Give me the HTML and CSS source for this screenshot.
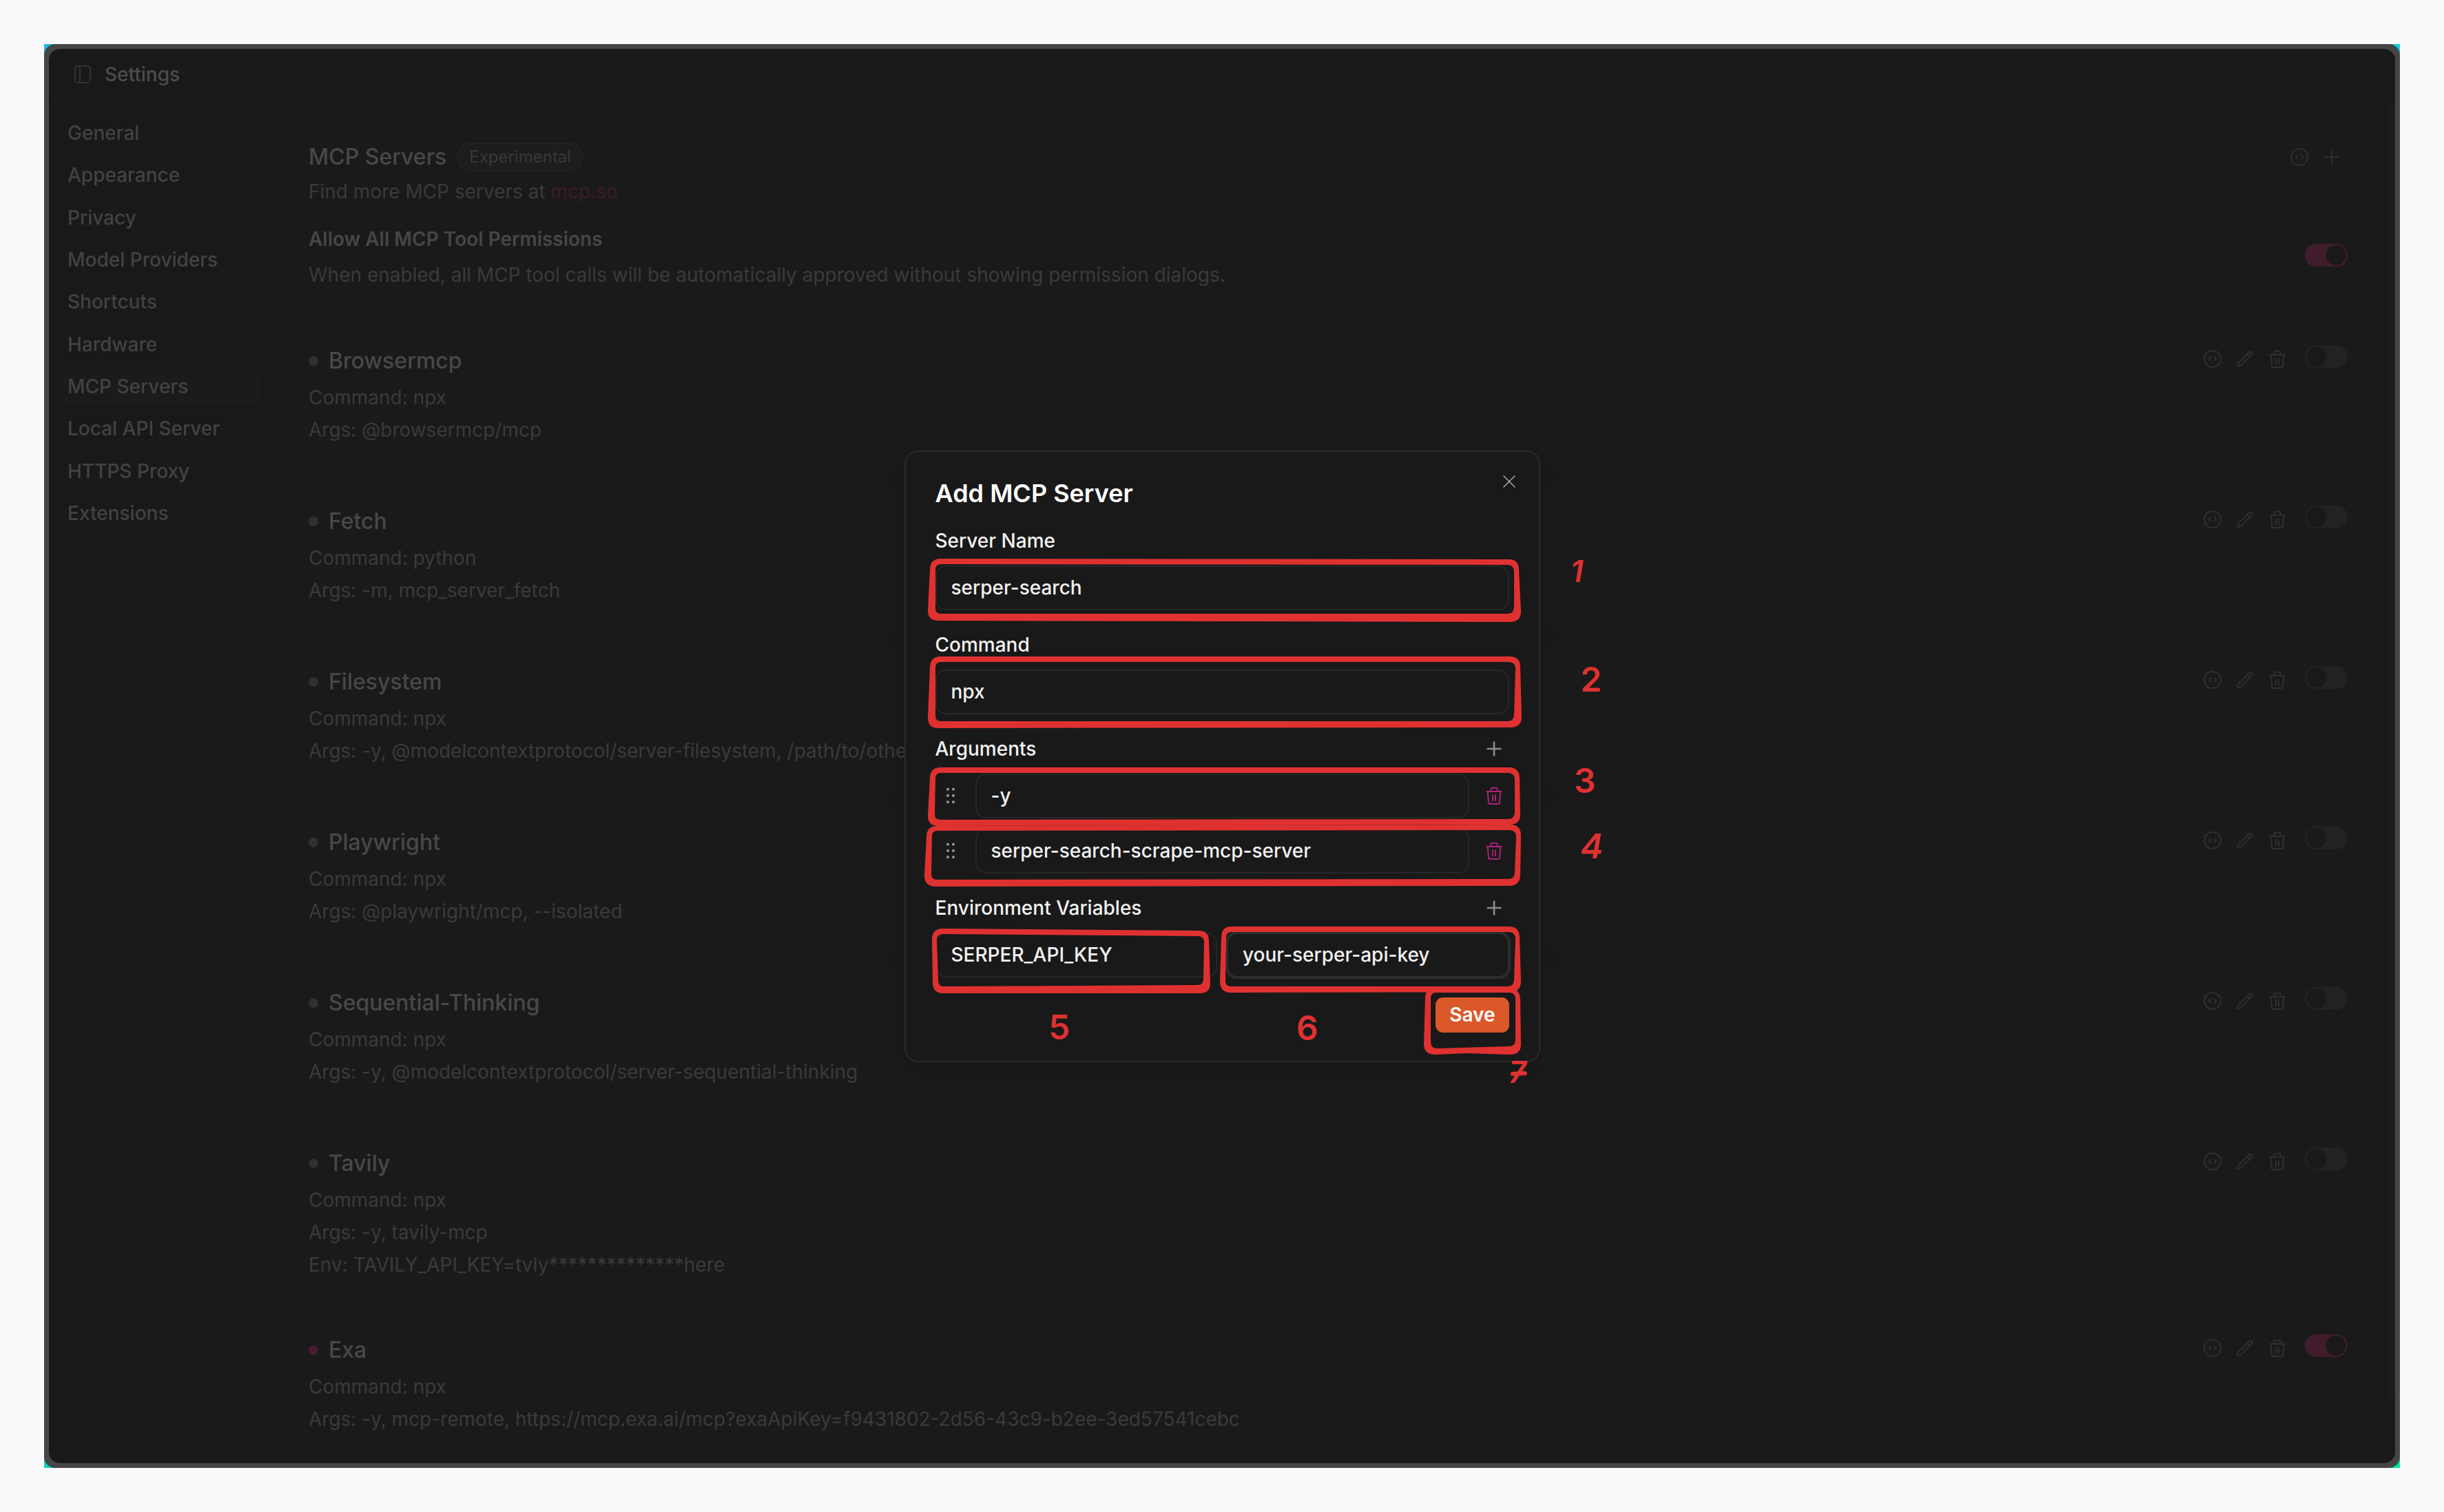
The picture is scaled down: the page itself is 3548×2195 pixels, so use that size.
FILE: index.html
```html
<!DOCTYPE html>
<html lang="en">
<head>
<meta charset="utf-8">
<title>Settings - MCP Servers</title>
<link rel="stylesheet" href="styles.css">
</head>
<body>
<svg class="sprite" aria-hidden="true">
  <symbol id="i-code" viewBox="0 0 24 24"><circle cx="12" cy="12" r="9"/><path d="M10 10l-2 2 2 2M14 10l2 2-2 2"/></symbol>
  <symbol id="i-pencil" viewBox="0 0 24 24"><path d="M4 20h1.500a3 3 0 0 0 2-.8L19.300 7.400a2 2 0 0 0 0-2.700a2 2 0 0 0-2.700 0L4.800 16.500a3 3 0 0 0-.8 2zM14.500 6.800l2.700 2.700"/></symbol>
  <symbol id="i-trash" viewBox="0 0 24 24"><path d="M4 7.500h16M8.500 7.500V5a1.500 1.500 0 0 1 1.500-1.500h4A1.500 1.500 0 0 1 15.500 5v2.500M5 7.500l1 12a1.500 1.500 0 0 0 1.500 1.500h9a1.500 1.500 0 0 0 1.500-1.500l1-12M10.500 11.500v6M13.500 11.500v6"/></symbol>
  <symbol id="i-plus" viewBox="0 0 24 24"><path d="M12 5v14M5 12h14"/></symbol>
  <symbol id="i-close" viewBox="0 0 24 24"><path d="M4 4l16 16M20 4L4 20"/></symbol>
  <symbol id="i-grip" viewBox="0 0 24 24"><circle cx="9" cy="5" r="1"/><circle cx="15" cy="5" r="1"/><circle cx="9" cy="12" r="1"/><circle cx="15" cy="12" r="1"/><circle cx="9" cy="19" r="1"/><circle cx="15" cy="19" r="1"/></symbol>
</svg>

<div class="desktop">
<div class="window">
  <header class="topbar">
    <button class="icon-btn" aria-label="Toggle sidebar"><svg class="panel-icon" viewBox="0 0 24 26"><rect x="1" y="1" width="22" height="24" rx="4"/><path d="M8 1v24"/></svg></button>
    <h1>Settings</h1>
  </header>
  <div class="columns">
    <nav class="sidebar">
      <a href="#">General</a>
      <a href="#">Appearance</a>
      <a href="#">Privacy</a>
      <a href="#">Model Providers</a>
      <a href="#">Shortcuts</a>
      <a href="#">Hardware</a>
      <a href="#" class="active">MCP Servers</a>
      <a href="#">Local API Server</a>
      <a href="#">HTTPS Proxy</a>
      <a href="#">Extensions</a>
    </nav>
    <main class="content">
      <section class="card intro">
        <div class="intro-head">
          <h2>MCP Servers</h2><span class="badge">Experimental</span>
          <div class="actions"><button class="icon-btn" aria-label="Edit all servers as JSON"><svg class="icon"><use href="#i-code"/></svg></button><button class="icon-btn" aria-label="Add server"><svg class="icon"><use href="#i-plus"/></svg></button></div>
        </div>
        <p>Find more MCP servers at <a href="#">mcp.so</a></p>
        <div class="permission">
          <div><h3><label for="allow-all">Allow All MCP Tool Permissions</label></h3>
          <p>When enabled, all MCP tool calls will be automatically approved without showing permission dialogs.</p></div>
          <input type="checkbox" class="switch" id="allow-all" checked>
        </div>
      </section>

      <section class="card">
        <div class="details"><h2><i class="dot"></i>Browsermcp</h2><p>Command: npx</p><p>Args: @browsermcp/mcp</p></div>
        <div class="tools"><div class="actions"><button class="icon-btn" aria-label="Edit JSON"><svg class="icon"><use href="#i-code"/></svg></button><button class="icon-btn" aria-label="Edit"><svg class="icon"><use href="#i-pencil"/></svg></button><button class="icon-btn" aria-label="Delete"><svg class="icon"><use href="#i-trash"/></svg></button></div><input type="checkbox" class="switch" aria-label="Enable Browsermcp"></div>
      </section>
      <section class="card">
        <div class="details"><h2><i class="dot"></i>Fetch</h2><p>Command: python</p><p>Args: -m, mcp_server_fetch</p></div>
        <div class="tools"><div class="actions"><button class="icon-btn" aria-label="Edit JSON"><svg class="icon"><use href="#i-code"/></svg></button><button class="icon-btn" aria-label="Edit"><svg class="icon"><use href="#i-pencil"/></svg></button><button class="icon-btn" aria-label="Delete"><svg class="icon"><use href="#i-trash"/></svg></button></div><input type="checkbox" class="switch" aria-label="Enable Fetch"></div>
      </section>
      <section class="card">
        <div class="details"><h2><i class="dot"></i>Filesystem</h2><p>Command: npx</p><p>Args: -y, @modelcontextprotocol/server-filesystem, /path/to/other</p></div>
        <div class="tools"><div class="actions"><button class="icon-btn" aria-label="Edit JSON"><svg class="icon"><use href="#i-code"/></svg></button><button class="icon-btn" aria-label="Edit"><svg class="icon"><use href="#i-pencil"/></svg></button><button class="icon-btn" aria-label="Delete"><svg class="icon"><use href="#i-trash"/></svg></button></div><input type="checkbox" class="switch" aria-label="Enable Filesystem"></div>
      </section>
      <section class="card">
        <div class="details"><h2><i class="dot"></i>Playwright</h2><p>Command: npx</p><p>Args: @playwright/mcp, --isolated</p></div>
        <div class="tools"><div class="actions"><button class="icon-btn" aria-label="Edit JSON"><svg class="icon"><use href="#i-code"/></svg></button><button class="icon-btn" aria-label="Edit"><svg class="icon"><use href="#i-pencil"/></svg></button><button class="icon-btn" aria-label="Delete"><svg class="icon"><use href="#i-trash"/></svg></button></div><input type="checkbox" class="switch" aria-label="Enable Playwright"></div>
      </section>
      <section class="card">
        <div class="details"><h2><i class="dot"></i>Sequential-Thinking</h2><p>Command: npx</p><p>Args: -y, @modelcontextprotocol/server-sequential-thinking</p></div>
        <div class="tools"><div class="actions"><button class="icon-btn" aria-label="Edit JSON"><svg class="icon"><use href="#i-code"/></svg></button><button class="icon-btn" aria-label="Edit"><svg class="icon"><use href="#i-pencil"/></svg></button><button class="icon-btn" aria-label="Delete"><svg class="icon"><use href="#i-trash"/></svg></button></div><input type="checkbox" class="switch" aria-label="Enable Sequential-Thinking"></div>
      </section>
      <section class="card">
        <div class="details"><h2><i class="dot"></i>Tavily</h2><p>Command: npx</p><p>Args: -y, tavily-mcp</p><p>Env: TAVILY_API_KEY=tvly**************here</p></div>
        <div class="tools"><div class="actions"><button class="icon-btn" aria-label="Edit JSON"><svg class="icon"><use href="#i-code"/></svg></button><button class="icon-btn" aria-label="Edit"><svg class="icon"><use href="#i-pencil"/></svg></button><button class="icon-btn" aria-label="Delete"><svg class="icon"><use href="#i-trash"/></svg></button></div><input type="checkbox" class="switch" aria-label="Enable Tavily"></div>
      </section>
      <section class="card">
        <div class="details"><h2><i class="dot on"></i>Exa</h2><p>Command: npx</p><p>Args: -y, mcp-remote, https://mcp.exa.ai/mcp?exaApiKey=f9431802-2d56-43c9-b2ee-3ed57541cebc</p></div>
        <div class="tools"><div class="actions"><button class="icon-btn" aria-label="Edit JSON"><svg class="icon"><use href="#i-code"/></svg></button><button class="icon-btn" aria-label="Edit"><svg class="icon"><use href="#i-pencil"/></svg></button><button class="icon-btn" aria-label="Delete"><svg class="icon"><use href="#i-trash"/></svg></button></div><input type="checkbox" class="switch" aria-label="Enable Exa" checked></div>
      </section>
    </main>
    <div class="scrollbar"></div>
  </div>
</div>

<div class="backdrop">
  <form class="dialog" role="dialog" aria-labelledby="dialog-title">
    <h2 id="dialog-title">Add MCP Server</h2>
    <button type="button" class="icon-btn close" aria-label="Close"><svg class="icon"><use href="#i-close"/></svg></button>
    <div class="field">
      <label for="name">Server Name</label>
      <input type="text" id="name" value="serper-search">
    </div>
    <div class="field">
      <label for="command">Command</label>
      <input type="text" id="command" value="npx">
    </div>
    <div class="field">
      <div class="field-head"><label for="arg1">Arguments</label><button type="button" class="icon-btn" aria-label="Add argument"><svg class="icon"><use href="#i-plus"/></svg></button></div>
      <div class="arg"><svg class="grip"><use href="#i-grip"/></svg><input type="text" id="arg1" value="-y"><button type="button" class="icon-btn remove" aria-label="Remove argument"><svg class="icon"><use href="#i-trash"/></svg></button></div>
      <div class="arg"><svg class="grip"><use href="#i-grip"/></svg><input type="text" aria-label="Argument 2" value="serper-search-scrape-mcp-server"><button type="button" class="icon-btn remove" aria-label="Remove argument"><svg class="icon"><use href="#i-trash"/></svg></button></div>
    </div>
    <div class="field">
      <div class="field-head"><label for="key">Environment Variables</label><button type="button" class="icon-btn" aria-label="Add variable"><svg class="icon"><use href="#i-plus"/></svg></button></div>
      <div class="pair"><input type="text" id="key" value="SERPER_API_KEY"><input type="text" class="focused" aria-label="Value" value="your-serper-api-key"></div>
    </div>
    <div class="footer"><button type="button" class="save">Save</button></div>

    <svg class="marks" viewBox="1313 652 923 890" aria-hidden="true">
      <g fill-rule="evenodd">
        <path d="M1366 809L2190 810Q2205 810 2205 825L2208 885Q2208 901 2192 901L1362 899Q1347 899 1347 884L1350 825Q1350 809 1366 809ZM1366 817Q1358 817 1358 825L1358 881Q1358 889 1366 889L2188 889Q2198 889 2198 879L2198 828Q2198 818 2188 818Z"/>
        <path d="M1366 951H2191Q2207 951 2207 966L2209 1038Q2209 1054 2193 1054L1362 1055Q1347 1055 1347 1040L1350 967Q1350 951 1366 951ZM1366 959Q1358 959 1358 967V1037Q1358 1045 1366 1045H2188Q2198 1045 2198 1035L2200 969Q2200 959 2190 959Z"/>
        <path d="M1366 1112H2190Q2206 1112 2206 1128L2207 1180Q2207 1195 2192 1195L1362 1197Q1347 1197 1347 1182L1350 1128Q1350 1112 1366 1112ZM1366 1120Q1358 1120 1358 1128L1357 1180Q1357 1188 1365 1188L2189 1187Q2199 1187 2199 1177V1130Q2199 1120 2189 1120Z"/>
        <path d="M1361 1197L2192 1195Q2208 1195 2208 1211L2207 1268Q2207 1283 2192 1284L1358 1285Q1342 1285 1342 1269L1345 1213Q1345 1197 1361 1197ZM1361 1204Q1353 1204 1353 1212L1352 1267Q1352 1275 1360 1275L2189 1274Q2199 1274 2199 1264L2201 1213Q2201 1203 2191 1203Z"/>
        <path d="M1369 1346L1740 1349Q1755 1349 1755 1364L1757 1425Q1757 1440 1742 1440H1369Q1354 1440 1354 1424L1353 1362Q1353 1346 1369 1346ZM1369 1354Q1360 1354 1360 1362L1362 1422Q1362 1430 1370 1430L1738 1428Q1747 1428 1747 1419L1748 1366Q1748 1357 1739 1357Z"/>
        <path d="M1788 1343H2190Q2206 1343 2206 1359L2208 1422Q2208 1438 2193 1438L1787 1439Q1771 1439 1771 1423L1773 1359Q1773 1343 1788 1343ZM1788 1351Q1780 1351 1780 1359L1779 1422Q1779 1430 1787 1430H2188Q2198 1430 2198 1420L2200 1361Q2200 1351 2190 1351Z"/>
        <path d="M2085 1431H2192Q2207 1434 2207 1450L2208 1514Q2208 1529 2192 1529L2130 1527L2083 1529Q2067 1529 2067 1513L2069 1447Q2069 1431 2085 1431ZM2085 1439Q2077 1439 2077 1447V1511Q2077 1520 2087 1520L2190 1517Q2200 1517 2200 1508V1448Q2200 1439 2191 1439Z"/>
      </g>
      <g class="numbers">
        <text class="slanted small" x="2289" y="843">1</text>
        <text x="2310" y="1002">2</text>
        <text x="2301" y="1149">3</text>
        <text class="slanted" x="2311" y="1244">4</text>
        <text x="1538" y="1507">5</text>
        <text x="1898" y="1508">6</text>
        <text class="slanted small" x="2203" y="1570">7</text>
      </g>
      <path class="crossbar" d="M2196 1557l18-1"/>
    </svg>
  </form>
</div>
</div>
</body>
</html>
```
FILE: styles.css
```css
* { box-sizing: border-box; margin: 0; }

body {
  padding: 64px;
  background: #f9fafc;
  color: #3c3c3c;
  font: 400 28px/47px Inter, "Liberation Sans", sans-serif;
}

a { color: inherit; text-decoration: none; }
.sprite { position: absolute; width: 0; height: 0; }

.desktop {
  position: relative;
  height: calc(100vh - 128px);
  background: linear-gradient(160deg, #22b5f2, #00e89a);
}

.window {
  display: flex;
  flex-direction: column;
  height: 100%;
  border: 7px solid #454545;
  border-radius: 16px;
  background: #454545;
}

.topbar {
  display: flex;
  align-items: center;
  gap: 20px;
  height: 75px;
  padding-left: 37px;
  border-bottom: 1px solid #1b1b1b;
  border-radius: 16px 16px 0 0;
  background: #191919;
}
.topbar h1 { color: #4c4c4c; font-size: 28px; font-weight: 500; }
.panel-icon { width: 24px; height: 26px; fill: none; stroke: #333; stroke-width: 2; }

.columns {
  display: flex;
  flex: 1;
  min-height: 0;
  padding-bottom: 37px;
  border-radius: 0 0 16px 16px;
  background: #191919;
}

.sidebar {
  display: grid;
  flex: none;
  align-content: space-between;
  width: 320px;
  height: 626px;
  padding: 21px 13px 0 13px;
}
.sidebar a {
  padding: 3px 14px;
  border-radius: 8px;
  color: #424242;
  font-weight: 500;
}
.sidebar .active { background: #1b1b1b; }

.content {
  display: flex;
  flex: 1;
  flex-direction: column;
  gap: 22px;
  overflow: hidden;
  padding: 29px 30px 0;
}

.card {
  display: flex;
  flex: none;
  justify-content: space-between;
  min-height: 211px;
  padding: 36px 27px 24px;
  border-radius: 18px;
  background: #1a1a1a;
}
.card p { color: #3a3a3a; }
.card h2 {
  display: flex;
  align-items: center;
  color: #484848;
  font-size: 32px;
  font-weight: 500;
  line-height: 36px;
}
.details h2 { margin-bottom: 12px; }

.dot { width: 14px; height: 14px; margin-right: 15px; border-radius: 50%; background: #303030; }
.dot.on { background: #461c30; }

.intro { display: block; padding: 32px 27px 25px; }
.intro-head { display: flex; align-items: center; gap: 15px; margin-bottom: 6px; padding-right: 7px; }
.intro-head .actions { margin-left: auto; }
.intro p a { color: #3d1a29; }
.badge {
  padding: 0 16px;
  border: 2px solid #222;
  border-radius: 21px;
  background: #1d1d1d;
  color: #383838;
  font-size: 24px;
  line-height: 38px;
}
.permission { display: flex; align-items: center; justify-content: space-between; margin-top: 27px; }
.permission h3 {
  margin-bottom: 11px;
  color: #464646;
  font-size: 28px;
  font-weight: 600;
  line-height: 36px;
}
.permission .switch { margin-bottom: 12px; }

.tools { display: flex; align-items: flex-start; gap: 24px; margin-top: -5px; }
.tools .actions { margin-top: 4px; }
.actions { display: flex; gap: 15px; color: #2f2f2f; }

.icon-btn {
  display: grid;
  flex: none;
  padding: 0;
  border: 0;
  background: none;
  color: inherit;
}
.icon { width: 32px; height: 32px; fill: none; stroke: currentColor; stroke-linecap: round; stroke-linejoin: round; stroke-width: 1.500; }

.switch {
  flex: none;
  appearance: none;
  width: 62px;
  height: 33px;
  border-radius: 17px;
  background: radial-gradient(circle at 17px 50%, #191919 14px, #222 15px);
}
.switch:checked { background: radial-gradient(circle at 45px 50%, #191919 14px, #401c2d 15px); }

.scrollbar { width: 12px; margin-bottom: 55px; border-radius: 6px; background: #1c1c1c; }

.backdrop {
  position: absolute;
  inset: 0;
  display: grid;
  place-items: center;
}

.dialog {
  position: relative;
  display: flex;
  flex-direction: column;
  gap: 31px;
  width: 100%;
  max-width: 923px;
  padding: 41px 43px;
  border: 2px solid #2b2b2b;
  border-radius: 20px;
  background: #191919;
  box-shadow: 0 12px 24px #0000001a;
  color: #f2f2f2;
}
.dialog h2 { color: #fff; font-size: 36px; font-weight: 600; line-height: 38px; }
.dialog label { font-weight: 500; line-height: 38px; }
.close { position: absolute; top: 31px; right: 31px; color: #aaa; }
.close .icon { width: 24px; height: 24px; }

.field { display: flex; flex-direction: column; gap: 17px; }
.field-head { display: flex; align-items: center; justify-content: space-between; padding-right: 6px; }
.field-head .icon-btn { color: #8b8b8b; }
.field-head .icon { stroke-width: 2; }
.arg { display: flex; align-items: center; gap: 20px; padding-right: 6px; }
.arg + .arg { margin-top: -2px; }
.remove { color: #a8237a; }
.grip { flex: none; width: 32px; height: 32px; margin-left: 6px; fill: #999; stroke: #999; }
.pair { display: grid; grid-template-columns: 1fr 1fr; gap: 14px; }

.dialog input {
  flex: 1 0 auto;
  min-width: 0;
  width: 100%;
  height: 65px;
  padding: 0 21px;
  border: 2px solid #272727;
  border-radius: 15px;
  outline: 0;
  background: #191919;
  color: #f2f2f2;
  font: 500 28px/38px Inter, "Liberation Sans", sans-serif;
}
.dialog .arg input { flex: 1; width: auto; }
.dialog .focused { box-shadow: 0 0 0 2px #2d2d2d; border-color: #2d2d2d; }

.footer { display: flex; justify-content: flex-end; margin-top: -2px; }
.save {
  padding: 0 20px;
  border: 0;
  border-radius: 11px;
  background: #da582a;
  color: #fff;
  font: 600 28px/51px Inter, "Liberation Sans", sans-serif;
}

.marks {
  position: absolute;
  top: -2px;
  left: -2px;
  width: 923px;
  height: 890px;
  overflow: visible;
  fill: #e03131;
  pointer-events: none;
}
.numbers { font: 600 50px Inter, sans-serif; text-anchor: middle; }
.numbers .slanted { font-style: italic; }
.numbers .small { font-size: 44px; }
.crossbar { fill: none; stroke: #e03131; stroke-width: 6; stroke-linecap: round; }
```
